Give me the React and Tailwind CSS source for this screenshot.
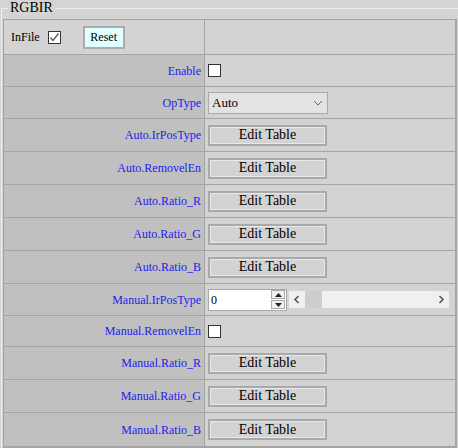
const rows = [
  { label: 'Enable', kind: 'check', h: 'h-[32px]' },
  { label: 'OpType', kind: 'select', h: 'h-[32px]' },
  { label: 'Auto.IrPosType', kind: 'table', h: 'h-[33px]' },
  { label: 'Auto.RemovelEn', kind: 'table', h: 'h-[33px]' },
  { label: 'Auto.Ratio_R', kind: 'table', h: 'h-[33px]' },
  { label: 'Auto.Ratio_G', kind: 'table', h: 'h-[33px]' },
  { label: 'Auto.Ratio_B', kind: 'table', h: 'h-[33px]' },
  { label: 'Manual.IrPosType', kind: 'number', h: 'h-[32px]' },
  { label: 'Manual.RemovelEn', kind: 'check', h: 'h-[31px]' },
  { label: 'Manual.Ratio_R', kind: 'table', h: 'h-[33px]' },
  { label: 'Manual.Ratio_G', kind: 'table', h: 'h-[33px]' },
  { label: 'Manual.Ratio_B', kind: 'table', h: 'h-[33px]' },
]

function Check({ checked }) {
  return (
    <span className="flex items-center justify-center w-[13px] h-[13px] bg-white border border-[#333]">
      {checked && (
        <svg width="11" height="11" viewBox="0 0 11 11">
          <path d="M1.5 5.5 L4 8.5 L9.5 1.5" fill="none" stroke="#555" strokeWidth="1.3" />
        </svg>
      )}
    </span>
  )
}

function EditButton() {
  return (
    <button className="w-[119px] h-[21px] border-2 border-[#a9a9a9] bg-[#d3d3d3] shadow-[inset_0_0_0_1px_#e8e8e8] text-[14px] leading-none text-black">
      Edit Table
    </button>
  )
}

function Value({ kind }) {
  if (kind === 'check') return <Check />
  if (kind === 'table') return <EditButton />
  if (kind === 'select') {
    return (
      <div className="flex items-center justify-between w-[120px] h-[22px] border border-[#a9a9a9] bg-[#e3e3e3] pl-[3px] pr-[4px] text-[13px]">
        <span>Auto</span>
        <svg width="10" height="6" viewBox="0 0 10 6">
          <path d="M1 1 L5 5 L9 1" fill="none" stroke="#666" strokeWidth="1" />
        </svg>
      </div>
    )
  }
  return (
    <div className="flex items-center">
      <div className="flex items-center justify-between w-[79px] h-[22px] border border-[#a9a9a9] bg-white pl-[2px] pr-[1px]">
        <span className="text-[12px] leading-none">0</span>
        <div className="flex flex-col gap-[1px]">
          <span className="flex items-center justify-center w-[14px] h-[9px] border border-[#a9a9a9] bg-[#f0f0f0]">
            <svg width="7" height="4" viewBox="0 0 7 4"><path d="M0 4 L3.5 0 L7 4 Z" fill="#222" /></svg>
          </span>
          <span className="flex items-center justify-center w-[14px] h-[9px] border border-[#a9a9a9] bg-[#f0f0f0]">
            <svg width="7" height="4" viewBox="0 0 7 4"><path d="M0 0 L3.5 4 L7 0 Z" fill="#222" /></svg>
          </span>
        </div>
      </div>
      <div className="flex items-center ml-[2px] w-[160px] h-[17px] bg-[#f0f0f0] pl-[4px] pr-[4px]">
        <svg width="7" height="9" viewBox="0 0 7 9"><path d="M5.5 1 L2 4.5 L5.5 8" fill="none" stroke="#555" strokeWidth="1.6" /></svg>
        <span className="ml-[5px] w-[17px] h-[17px] bg-[#cdcdcd]" />
        <span className="flex-1" />
        <svg width="7" height="9" viewBox="0 0 7 9"><path d="M1.5 1 L5 4.5 L1.5 8" fill="none" stroke="#555" strokeWidth="1.6" /></svg>
      </div>
    </div>
  )
}

export default function App() {
  return (
    <div className="w-[458px] h-[448px] bg-[#d4d4d4] overflow-hidden font-['Liberation_Serif',serif] text-black">
      <fieldset className="ml-[1px] h-[447px] border-l border-t border-[#ececec] pl-[1px] pt-[3px]">
        <legend className="ml-[5px] px-[2px] text-[14px] leading-[16px]">RGBIR</legend>
        <div className="w-[454px] border-t border-l border-r-2 border-b-2 border-[#a4a4a4]">
          <div className="flex h-[35px] border-b border-[#a4a4a4]">
            <div className="flex items-center w-[201px] bg-[#d3d3d3] border-r border-[#a4a4a4] pl-[7px] text-[12px]">
              <span>InFile</span>
              <span className="ml-[8px]"><Check checked /></span>
              <button className="ml-[22px] w-[42px] h-[23px] border-2 border-[#acacac] bg-[#e0ffff] text-[12px] leading-none">
                Reset
              </button>
            </div>
            <div className="flex-1 bg-[#d3d3d3]" />
          </div>
          {rows.map((r, i) => (
            <div key={r.label} className={`flex ${r.h} ${i < rows.length - 1 ? 'border-b' : ''} border-[#a4a4a4]`}>
              <div className="flex items-center justify-end w-[201px] bg-[#c0c0c0] border-r border-[#a4a4a4] pr-[3px] text-[12px] text-[#1c1cf0]">
                {r.label}
              </div>
              <div className="flex flex-1 items-center bg-[#d3d3d3] pl-[3px]">
                <Value kind={r.kind} />
              </div>
            </div>
          ))}
        </div>
      </fieldset>
    </div>
  )
}
